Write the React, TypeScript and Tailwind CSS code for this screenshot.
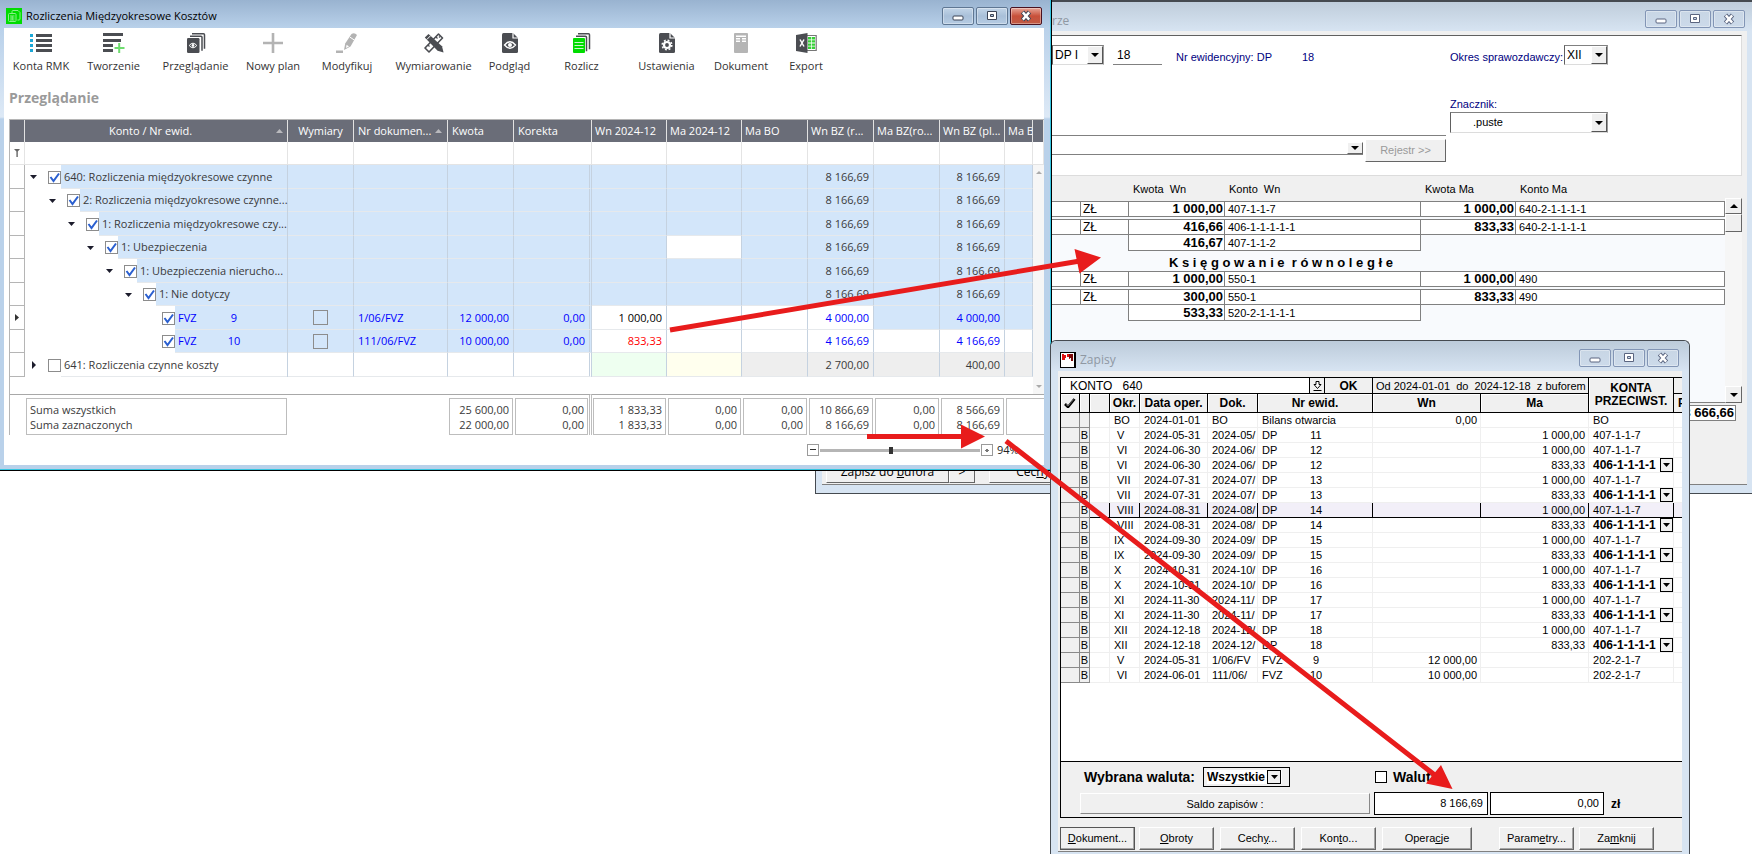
import React from "react";
import type { ReactNode } from "react";

const UI = "font-['Open_Sans','Noto_Sans',sans-serif]";
const CLASSIC = "font-['Liberation_Sans',Arial,sans-serif]";

/* ---------- toolbar icons ---------- */

const icons: Record<string, ReactNode> = {
  konta: (
    <svg width="22" height="20" viewBox="0 0 22 20">
      {[1, 6, 11, 16].map((y) => (
        <g key={y}>
          <rect x="0" y={y} width="3" height="3" fill="#1ba7d6" />
          <rect x="6" y={y} width="16" height="3" fill="#4b4d52" />
        </g>
      ))}
    </svg>
  ),
  tworzenie: (
    <svg width="22" height="20" viewBox="0 0 22 20">
      <path d="M0 0h20v3H0zM0 6h18v3H0zM0 11h10v3H0zM0 16h10v3H0z" fill="#4b4d52" />
      <path d="M16.2 10v10M11.5 15h10" stroke="#6fdc6f" strokeWidth="2" />
    </svg>
  ),
  przegladanie: (
    <svg width="20" height="20" viewBox="0 0 20 20">
      <path d="M6 .8h11.500q1 0 1 1v14" fill="none" stroke="#4b4d52" strokeWidth="1.500" />
      <path d="M4 3.200h11q1 0 1 1v13.500" fill="none" stroke="#4b4d52" strokeWidth="1.500" />
      <rect x="1" y="5" width="12.500" height="15" rx="1.200" fill="#4b4d52" />
      <path d="M3.200 12.500q3.800-4.600 7.600 0q-3.800 4.600-7.600 0z" fill="none" stroke="#fff" strokeWidth="1" />
      <circle cx="7" cy="12.500" r="1.400" fill="#fff" />
    </svg>
  ),
  nowy: (
    <svg width="22" height="20" viewBox="0 0 22 20">
      <path d="M11 0v20M1 10h20" stroke="#b3b3b3" strokeWidth="2.600" />
    </svg>
  ),
  modyfikuj: (
    <svg width="22" height="20" viewBox="0 0 22 20">
      <path d="M8 17l1.200-6.500L15.500 1q3-2 5.500 1L14.500 13.500z" fill="#b3b3b3" />
      <path d="M10 15l.6-3.200 2.400 1.600z" fill="#fff" />
      <path d="M14 4.200l4.600 3" stroke="#fff" strokeWidth="1" />
      <rect x="0" y="17.500" width="7" height="2.500" fill="#b3b3b3" />
    </svg>
  ),
  wymiarowanie: (
    <svg width="20" height="20" viewBox="0 0 20 20">
      <path d="M14.500 1l4 4L5 19l-4-4z" fill="#fff" stroke="#4b4d52" strokeWidth="1.600" strokeLinejoin="round" />
      <path d="M12 4l1.500 1.500M9 7l1.500 1.500M4 12l1.500 1.500M15 3.500l1 1" stroke="#4b4d52" strokeWidth="1.200" />
      <path d="M.8 4.500L4.500 1 18 13.200l1.600 6.200-6-1.700z" fill="#4b4d52" />
      <path d="M2.800 6.500l3.600-3.600" stroke="#fff" strokeWidth="1" />
    </svg>
  ),
  podglad: (
    <svg width="16" height="20" viewBox="0 0 16 20">
      <path d="M1.500 0H11l5 5v13.500q0 1.500-1.500 1.500h-13Q0 20 0 18.500v-17Q0 0 1.500 0z" fill="#4b4d52" />
      <path d="M11 0v5h5" fill="none" stroke="#fff" strokeWidth="1.200" />
      <path d="M2.500 12q5.500-6.500 11 0q-5.500 6.500-11 0z" fill="none" stroke="#fff" strokeWidth="1.300" />
      <circle cx="8" cy="12" r="2" fill="#fff" />
    </svg>
  ),
  rozlicz: (
    <svg width="18" height="20" viewBox="0 0 18 20">
      <path d="M5 .8h10.500q1 0 1 1v14.500" fill="none" stroke="#4b4d52" strokeWidth="1.500" />
      <path d="M3 3.300h9.500q1 0 1 1v14" fill="none" stroke="#4b4d52" strokeWidth="1.500" />
      <rect x="0" y="5" width="12" height="15" rx="1" fill="#00dc00" />
      <path d="M1.500 9.500h9M1.500 12.500h9M1.500 15.500h9" stroke="#c9f7c9" strokeWidth="1.200" />
    </svg>
  ),
  ustawienia: (
    <svg width="16" height="20" viewBox="0 0 16 20">
      <path d="M1.500 0H11l5 5v13.500q0 1.500-1.500 1.500h-13Q0 20 0 18.500v-17Q0 0 1.500 0z" fill="#4b4d52" />
      <path d="M11 0v5h5" fill="none" stroke="#fff" strokeWidth="1.200" />
      <circle cx="8" cy="12" r="3" fill="none" stroke="#fff" strokeWidth="2.200" />
      <circle cx="8" cy="12" r="4.800" fill="none" stroke="#fff" strokeWidth="1.600" strokeDasharray="1.900 1.870" />
    </svg>
  ),
  dokument: (
    <svg width="14" height="20" viewBox="0 0 14 20">
      <rect width="14" height="20" rx="1" fill="#b5b5b5" />
      <path d="M2 3.200h10M2 5.800h4M8 5.800h4M2 8.200h4M8 8.200h4" stroke="#fff" strokeWidth="1.400" />
    </svg>
  ),
  export: (
    <svg width="21" height="20" viewBox="0 0 21 20">
      <path d="M10 2.500h10.200v15H10" fill="#fff" stroke="#777" strokeWidth="1.200" />
      <path d="M12 4h3.300v2.400H12zM16 4h3v2.400h-3zM12 7.200h3.300v2.400H12zM16 7.200h3v2.400h-3zM12 10.400h3.300v2.400H12zM16 10.400h3v2.400h-3zM12 13.600h3.300V16H12zM16 13.600h3V16h-3z" fill="#37cf37" />
      <path d="M0 2L11.500 0v20L0 18z" fill="#4b4d52" />
      <path d="M4 6.500l4 7M8 6.500l-4 7" stroke="#fff" strokeWidth="1.500" />
    </svg>
  ),
};

const tools = [
  { icon: "konta", label: "Konta RMK", w: "w-[74px]" },
  { icon: "tworzenie", label: "Tworzenie", w: "w-[71px]" },
  { icon: "przegladanie", label: "Przeglądanie", w: "w-[93px]" },
  { icon: "nowy", label: "Nowy plan", w: "w-[62px]" },
  { icon: "modyfikuj", label: "Modyfikuj", w: "w-[86px]" },
  { icon: "wymiarowanie", label: "Wymiarowanie", w: "w-[87px]" },
  { icon: "podglad", label: "Podgląd", w: "w-[65px]" },
  { icon: "rozlicz", label: "Rozlicz", w: "w-[79px]" },
  { icon: "ustawienia", label: "Ustawienia", w: "w-[91px]" },
  { icon: "dokument", label: "Dokument", w: "w-[58px]" },
  { icon: "export", label: "Export", w: "w-[72px]" },
];

/* ---------- shared pieces ---------- */

const captionLook = {
  active: "border-[#5f7793] bg-linear-to-b from-[#c3d5e8] via-[#a9c0d9] to-[#b6cce3]",
  inactive: "border-[#8295b5] bg-linear-to-b from-[#c8d6e5] to-[#ccdaea]",
  close: "border-[#4a1220] bg-linear-to-b from-[#e5a598] via-[#c8503a] to-[#c05a45]",
};

function CaptionButton({ kind, look }: { kind: "min" | "max" | "close"; look: keyof typeof captionLook }) {
  const line = look === "inactive" ? "#5a6580" : "#3c4456";
  return (
    <button
      aria-label={kind}
      className={`flex h-[18px] w-8 items-center justify-center rounded-xs border shadow-[inset_0_0_0_1px_rgba(255,255,255,0.35)] ${captionLook[look]}`}
    >
      <svg width="14" height="12" viewBox="0 0 14 12">
        {kind === "min" && <rect x="2" y="6" width="10" height="4" rx="1" fill="#fff" stroke={line} />}
        {kind === "max" && (
          <path d="M2.500 1.500h9v8h-9zM5.500 4.500h3v2h-3z" fill="#fff" fillRule="evenodd" stroke={line} />
        )}
        {kind === "close" && (
          <>
            <path d="M3.500 2l7 8M10.500 2l-7 8" stroke={line} strokeWidth="4.400" />
            <path d="M3.800 2.400l6.400 7.200M10.200 2.400l-6.400 7.200" stroke="#fff" strokeWidth="2.400" />
          </>
        )}
      </svg>
    </button>
  );
}

function Triangle({ dir, color = "#000", w = 8, h = 4 }: { dir: "up" | "down" | "right"; color?: string; w?: number; h?: number }) {
  const d = dir === "up" ? `M0 ${h}H${w}L${w / 2} 0z` : dir === "down" ? `M0 0H${w}L${w / 2} ${h}z` : `M0 0L${w} ${h / 2}L0 ${h}z`;
  return (
    <svg width={w} height={h} viewBox={`0 0 ${w} ${h}`} className="shrink-0">
      <path d={d} fill={color} />
    </svg>
  );
}

function Combo({ value, label, box, text }: { value: string; label: string; box: string; text: string }) {
  return (
    <div className={`relative flex border border-b-[#dcdcdc] border-r-[#9a9a9a] border-t-[#808080] border-l-[#606060] bg-white ${box}`}>
      <select aria-label={label} className={`w-full appearance-none bg-white whitespace-pre text-black outline-none ${text}`} defaultValue={value}>
        <option value={value}>{value}</option>
      </select>
      <span className="pointer-events-none absolute inset-y-0 right-0 flex w-4 items-center justify-center border border-t-white border-r-[#555] border-b-[#555] border-l-white bg-[#f0f0f0]">
        <Triangle dir="down" />
      </span>
    </div>
  );
}

/* ---------- posting window ---------- */

const postings = [
  { zl: true, wn: "1 000,00", kw: "407-1-1-7", ma: "1 000,00", km: "640-2-1-1-1-1" },
  { gap: true },
  { zl: true, wn: "416,66", kw: "406-1-1-1-1-1", ma: "833,33", km: "640-2-1-1-1-1" },
  { zl: false, wn: "416,67", kw: "407-1-1-2" },
  { title: "K s i ę g o w a n i e  r ó w n o l e g ł e" },
  { zl: true, wn: "1 000,00", kw: "550-1", ma: "1 000,00", km: "490" },
  { gap: true },
  { zl: true, wn: "300,00", kw: "550-1", ma: "833,33", km: "490" },
  { zl: false, wn: "533,33", kw: "520-2-1-1-1-1" },
];

function PostingWindow() {
  const raised = "border border-t-white border-l-white border-r-[#666] border-b-[#666] bg-[#f0f0f0]";
  return (
    <section
      className={`absolute top-0 right-0 left-[815px] flex h-[494px] flex-col border-t-2 border-b border-l border-[#454a50] bg-[#d7e4f2] pr-[5px] pb-2 pl-[6px] text-[11px] ${CLASSIC}`}
    >
      <header className="-mr-[5px] -ml-[6px] flex h-[29px] shrink-0 items-center bg-linear-to-b from-[#bfcddb] to-[#d7e4f2] pr-[7px] pl-[236px]">
        <h2 className={`flex-1 pt-2 text-[12px] leading-4 text-[#8f98a3] ${UI}`}>rze</h2>
        <div className="flex gap-[2px] pt-1">
          <CaptionButton kind="min" look="inactive" />
          <CaptionButton kind="max" look="inactive" />
          <CaptionButton kind="close" look="inactive" />
        </div>
      </header>
      <div className="flex min-h-0 flex-1 flex-col bg-[#f0f0f0] pt-1">
        <div className="mr-[5px] flex h-[141px] shrink-0 border-t border-r border-b border-t-[#606060] border-r-[#dcdcdc] border-b-[#dcdcdc] bg-white pl-[230px]">
          <div className="flex-1 pt-[9px] pr-1">
            <div className="flex h-5 items-center">
              <Combo label="Typ dokumentu" value={"DP    I"} box="h-5 w-[52px]" text="pl-[2px] text-[12px]" />
              <input aria-label="Numer" defaultValue="18" className="ml-[9px] h-5 w-[49px] border-b border-[#808080] pl-1 text-[12px] outline-none" />
              <span className="ml-[14px] pt-1 text-[#000080]">Nr ewidencyjny: DP</span>
              <span className="ml-[30px] pt-1 text-[#000080]">18</span>
            </div>
            <div className="h-[71px] border-b border-[#808080]" />
            <div className="flex items-start gap-[2px]">
              <div className="flex h-[19px] flex-1 items-end justify-end border-b border-[#808080]">
                <button aria-label="Rozwiń" className={`flex h-3 w-4 items-center justify-center ${raised}`}>
                  <Triangle dir="down" />
                </button>
              </div>
              <button className={`mt-[3px] h-[23px] w-[81px] text-[11px] text-[#9a9a9a] ${raised}`}>Rejestr &gt;&gt;</button>
            </div>
          </div>
          <div className="w-[291px] pt-[9px]">
            <div className="flex h-5 items-center">
              <span className="w-[114px] shrink-0 pt-1 whitespace-nowrap text-[#000080]">Okres sprawozdawczy:</span>
              <Combo label="Okres sprawozdawczy" value="XII" box="h-5 w-11" text="pl-[2px] text-[12px]" />
            </div>
            <div className="mt-8 h-[15px] leading-[14px] text-[#000080]">Znacznik:</div>
            <Combo label="Znacznik" value=".puste" box="h-[21px] w-[158px]" text="pl-[22px] text-[11px]" />
          </div>
        </div>
        <div className="mr-[5px] flex h-[227px] shrink-0">
          <div className="flex-1 border-b border-[#808080] bg-[#f8fafd]">
            <table className="w-full table-fixed border-separate border-spacing-0 leading-[14px]">
              <colgroup>
                <col className="w-[259px]" />
                <col className="w-12" />
                <col className="w-24" />
                <col className="w-[196px]" />
                <col className="w-[95px]" />
                <col />
              </colgroup>
              <thead>
                <tr className="h-[25px] bg-[#f0f0f0] text-left whitespace-pre [&>th]:p-0 [&>th]:pt-px [&>th]:pl-1 [&>th]:font-normal">
                  <th />
                  <th />
                  <th>Kwota  Wn</th>
                  <th>Konto  Wn</th>
                  <th>Kwota Ma</th>
                  <th>Konto Ma</th>
                </tr>
              </thead>
              <tbody>
                {postings.map((p, i) => {
                  if (p.gap) return <tr key={i}><td colSpan={6} className="h-[2px] p-0" /></tr>;
                  if (p.title)
                    return (
                      <tr key={i}>
                        <td colSpan={2} />
                        <td colSpan={4} className="h-5 p-0 pt-1 pl-10 text-[13px] font-bold whitespace-pre">{p.title}</td>
                      </tr>
                    );
                  const top = p.zl ? "border-t" : "";
                  const cell = `h-4 border-r border-b border-[#808080] bg-white p-0 ${top}`;
                  return (
                    <tr key={i}>
                      <td className={p.zl ? cell : "p-0"} />
                      <td className={p.zl ? `${cell} pl-[2px] text-[12px]` : "border-r border-[#808080] p-0"}>{p.zl ? "ZŁ" : ""}</td>
                      <td className={`${cell} pr-px text-right text-[13px] font-bold`}>{p.wn}</td>
                      <td className={`${cell} pl-[3px]`}>{p.kw}</td>
                      <td className={p.zl ? `${cell} pr-px text-right text-[13px] font-bold` : "p-0"}>{p.ma}</td>
                      <td className={p.zl ? `${cell} pl-[3px]` : "p-0"}>{p.km}</td>
                    </tr>
                  );
                })}
              </tbody>
            </table>
          </div>
          <div className="mt-[22px] flex w-[17px] flex-col bg-[#f6f6f6]">
            <button aria-label="Góra" className={`flex h-4 items-center justify-center ${raised}`}>
              <Triangle dir="up" />
            </button>
            <div className={`h-[18px] ${raised}`} />
            <button aria-label="Dół" className={`mt-auto flex h-[17px] items-center justify-center ${raised}`}>
              <Triangle dir="down" />
            </button>
          </div>
        </div>
        <div className="mt-[2px] mr-[11px] flex justify-end">
          <output className="h-4 border border-[#808080] bg-white px-px text-[13px] leading-[14px] font-bold">3 666,66</output>
        </div>
        <div className="mt-auto flex h-6 border-b border-[#808080] pb-px pl-1 text-[12px]">
          <button className={`w-[123px] ${raised} ${UI}`}>Zapisz do <u>b</u>ufora</button>
          <button className={`w-[26px] ${raised} ${UI}`}>&gt;</button>
          <button className={`ml-[14px] w-[88px] ${raised} ${UI}`}>Cec<u>h</u>y</button>
        </div>
      </div>
    </section>
  );
}

/* ---------- settlements window ---------- */

function Check({ label, checked, box }: { label: string; checked?: boolean; box: string }) {
  return (
    <span className={`relative inline-flex shrink-0 ${box}`}>
      <input type="checkbox" aria-label={label} defaultChecked={checked} className="peer size-full appearance-none border border-[#8c8c8c] bg-transparent" />
      <svg viewBox="0 0 13 13" className="pointer-events-none absolute inset-0 hidden size-full peer-checked:block">
        <path d="M2.500 6l3 4L11 2.500" fill="none" stroke="#2a5fd0" strokeWidth="2" />
      </svg>
    </span>
  );
}

type Row = {
  level: number;
  name: string;
  num?: string;
  doc?: string;
  kwota?: string;
  kor?: string;
  wn?: string;
  bz: string;
  pl: string;
  kind: "group" | "current" | "leaf" | "plain";
};

const rows: Row[] = [
  { level: 0, name: "640: Rozliczenia międzyokresowe czynne", bz: "8 166,69", pl: "8 166,69", kind: "group" },
  { level: 1, name: "2: Rozliczenia międzyokresowe czynne...", bz: "8 166,69", pl: "8 166,69", kind: "group" },
  { level: 2, name: "1: Rozliczenia międzyokresowe czy...", bz: "8 166,69", pl: "8 166,69", kind: "group" },
  { level: 3, name: "1: Ubezpieczenia", bz: "8 166,69", pl: "8 166,69", kind: "group" },
  { level: 4, name: "1: Ubezpieczenia nierucho...", bz: "8 166,69", pl: "8 166,69", kind: "group" },
  { level: 5, name: "1: Nie dotyczy", bz: "8 166,69", pl: "8 166,69", kind: "group" },
  { level: 6, name: "FVZ", num: "9", doc: "1/06/FVZ", kwota: "12 000,00", kor: "0,00", wn: "1 000,00", bz: "4 000,00", pl: "4 000,00", kind: "current" },
  { level: 6, name: "FVZ", num: "10", doc: "111/06/FVZ", kwota: "10 000,00", kor: "0,00", wn: "833,33", bz: "4 166,69", pl: "4 166,69", kind: "leaf" },
  { level: 0, name: "641: Rozliczenia czynne koszty", bz: "2 700,00", pl: "400,00", kind: "plain" },
];

const indent = ["pl-0", "pl-[19px]", "pl-[38px]", "pl-[57px]", "pl-[76px]", "pl-[95px]", "pl-[114px]"];

const totals: [string, string][] = [
  ["1 833,33", "1 833,33"],
  ["0,00", "0,00"],
  ["0,00", "0,00"],
  ["10 866,69", "8 166,69"],
  ["0,00", "0,00"],
  ["8 566,69", "8 166,69"],
];

function Total({ pair, last }: { pair: [string, string]; last?: string }) {
  return (
    <td className={`px-px pt-[3px] pb-0 ${last ?? ""}`}>
      <div className="h-[37px] border border-[#bdbdbd] pt-[3px] pr-[3px] text-right leading-[15px]">
        <div>{pair[0]}</div>
        <div>{pair[1]}</div>
      </div>
    </td>
  );
}

function SettlementGrid() {
  const blue = "bg-[#d3e6fa]";
  const split = "border-r-3 border-double border-r-[#bdbdbd]";
  const heads = ["Wn 2024-12", "Ma 2024-12", "Ma BO", "Wn BZ (r...", "Ma BZ(ro...", "Wn BZ (pl...", "Ma B"];
  return (
    <div className="flex border-t border-l border-[#b5b5b5]">
      <table className="w-full flex-1 table-fixed border-separate border-spacing-0 text-[11px] leading-4 text-[#3a3a3a]">
        <colgroup>
          <col className="w-[15px]" />
          <col className="w-[263px]" />
          <col className="w-[66px]" />
          <col className="w-[94px]" />
          <col className="w-[66px]" />
          <col className="w-[78px]" />
          <col className="w-[75px]" />
          <col className="w-[75px]" />
          <col className="w-[66px]" />
          <col className="w-[66px]" />
          <col className="w-[66px]" />
          <col className="w-[65px]" />
          <col className="w-[28px]" />
          <col />
        </colgroup>
        <thead>
          <tr className="h-[22px] bg-[#6a6d78] text-left text-white [&>th]:overflow-hidden [&>th]:border-r [&>th]:border-[#e2e2e2] [&>th]:p-0 [&>th]:font-normal [&>th]:whitespace-nowrap">
            <th />
            <th>
              <div className="flex items-center pr-1">
                <span className="flex-1 text-center">Konto / Nr ewid.</span>
                <Triangle dir="up" color="#b9b9bd" w={7} />
              </div>
            </th>
            <th className="text-center">Wymiary</th>
            <th>
              <div className="flex items-center justify-between pr-[5px] pl-1">
                Nr dokumen... <Triangle dir="up" color="#b9b9bd" w={7} />
              </div>
            </th>
            <th><span className="pl-1">Kwota</span></th>
            <th className={split}><span className="pl-1">Korekta</span></th>
            {heads.map((h) => (
              <th key={h}><span className="pl-[3px]">{h}</span></th>
            ))}
            <th />
          </tr>
          <tr className="h-[23px] [&>td]:border-r [&>td]:border-b [&>td]:border-[#e4e4e4] [&>td]:p-0">
            <td className="border-[#b5b5b5]">
              <svg width="6" height="8" viewBox="0 0 6 8" className="mx-auto">
                <path d="M0 0h6L3.800 2.500V8H2.400V2.500z" fill="#666" />
              </svg>
            </td>
            <td /><td /><td /><td />
            <td className={split} />
            <td /><td /><td /><td /><td /><td /><td /><td />
          </tr>
        </thead>
        <tbody>
          {rows.map((r, i) => {
            const item = r.kind === "current" || r.kind === "leaf";
            const left = r.kind === "plain" ? "bg-white" : blue;
            const rest = { group: blue, current: blue, leaf: "bg-white", plain: "bg-[#eeeeee]" }[r.kind];
            const mid = item ? "bg-white" : rest;
            const c = "border-r border-b border-r-[#c5d2e0] border-b-[#e6e9ec] p-0 ";
            const num = item ? "pr-1 text-right text-[#0000ff]" : "pr-1 text-right";
            return (
              <tr key={i} className="odd:h-6 even:h-[23px]">
                <td className="border-r border-b border-[#b5b5b5] p-0">
                  {r.kind === "current" && <span className="flex justify-center"><Triangle dir="right" w={4} h={7} color="#333" /></span>}
                </td>
                <td className="h-px border-r border-[#c5d2e0] p-0">
                  <div className={`flex h-full items-center ${indent[r.level]}`}>
                    <span className="mr-[5px] flex w-[18px] shrink-0 items-center justify-center pr-px">
                      {!item && (r.kind === "plain" ? <Triangle dir="right" w={4} h={8} color="#1c1c2c" /> : <Triangle dir="down" w={7} h={4} color="#1c1c2c" />)}
                    </span>
                    <Check label={r.name} checked={r.kind !== "plain"} box="size-[13px]" />
                    <span className={`flex h-full min-w-0 flex-1 items-center border-b border-[#e6e9ec] pl-[3px] whitespace-nowrap ${left} ${item ? "text-[#0000ff]" : ""}`}>
                      {item ? (
                        <>
                          <span className="w-[46px]">{r.name}</span>
                          <span className="w-5 text-center">{r.num}</span>
                        </>
                      ) : (
                        r.name
                      )}
                    </span>
                  </div>
                </td>
                <td className={c + left}>
                  {item && <span className="flex justify-center"><Check label="Wymiary" box="size-[15px]" /></span>}
                </td>
                <td className={`${c}${left}`}><span className="pl-1 text-[#0000ff]">{r.doc}</span></td>
                <td className={`${c}${left} ${num}`}>{r.kwota}</td>
                <td className={`${c}${left} ${num} ${split}`}>{r.kor}</td>
                <td className={`${c}${r.kind === "plain" ? "bg-[#eefff0]" : mid} pr-1 text-right ${r.kind === "leaf" ? "text-[#ff0000]" : "text-black"}`}>{r.wn}</td>
                <td className={`${c}${r.kind === "plain" ? "bg-[#ffffee]" : i === 3 ? "bg-white" : mid}`} />
                <td className={c + mid} />
                <td className={`${c}${mid} ${num}`}>{r.bz}</td>
                <td className={c + rest} />
                <td className={`${c}${rest} ${num}`}>{r.pl}</td>
                <td className={c + rest} />
                {i === 0 && (
                  <td rowSpan={10} className="h-px bg-[#f6f6f6] p-0">
                    <div className="flex h-full flex-col items-center justify-between py-[6px]">
                      <Triangle dir="up" color="#aaa" w={6} h={3} />
                      <Triangle dir="down" color="#aaa" w={6} h={3} />
                    </div>
                  </td>
                )}
              </tr>
            );
          })}
          <tr className="h-[17px]"><td colSpan={13} className="p-0" /></tr>
        </tbody>
        <tfoot>
          <tr className="[&>td]:border-t [&>td]:border-t-[#a8a8a8]">
            <td />
            <td className="px-px pt-[3px] pb-0">
              <div className="h-[37px] border border-[#bdbdbd] pt-[3px] pl-[3px] leading-[15px]">
                <div>Suma wszystkich</div>
                <div>Suma zaznaczonych</div>
              </div>
            </td>
            <td />
            <td />
            <Total pair={["25 600,00", "22 000,00"]} />
            <Total pair={["0,00", "0,00"]} last={split} />
            {totals.map((t, i) => (
              <Total key={i} pair={t} />
            ))}
            <td colSpan={2} className="pt-[3px] pr-0 pb-0 pl-px">
              <div className="h-[37px] border-t border-b border-l border-[#bdbdbd]" />
            </td>
          </tr>
        </tfoot>
      </table>
    </div>
  );
}

function SettlementWindow() {
  const step = "flex size-3 items-center justify-center border border-[#9a9a9a] bg-white";
  return (
    <section
      className={`absolute top-0 left-0 z-10 flex h-[471px] w-[1052px] flex-col border-r border-b border-black bg-[linear-gradient(to_bottom,#99b3d0_0px,#b9d1ea_28px,#dde9f6_117px,#b9d1ea_119px)] pr-[7px] pb-[5px] pl-1 shadow-[inset_-1px_-1px_0_#35c5e0] ${UI}`}
    >
      <header className="flex h-7 shrink-0 items-center pt-1 pl-[2px]">
        <svg width="16" height="16" viewBox="0 0 16 16">
          <rect width="16" height="16" fill="#00dc00" />
          <path d="M6 5V3.500q0-1 1-1h5l2 2V11q0 1-1 1h-1.500M2.500 6.500q0-1 1-1H9q1 0 1 1v6q0 1-1 1H3.500q-1 0-1-1zM4 8h4.500M4 10h4.500M4 12h4.500M6.200 8v4" fill="none" stroke="#8af08a" strokeWidth="1" />
        </svg>
        <h1 className="ml-1 flex-1 text-[11px] text-black">Rozliczenia Międzyokresowe Kosztów</h1>
        <div className="mr-[2px] flex gap-[2px]">
          <CaptionButton kind="min" look="active" />
          <CaptionButton kind="max" look="active" />
          <CaptionButton kind="close" look="close" />
        </div>
      </header>
      <div className="flex flex-1 flex-col bg-white">
        <nav className="flex pt-[5px]">
          {tools.map((t) => (
            <button key={t.label} className={`flex h-11 flex-col items-center gap-[5px] text-[11px] leading-4 text-[#333] ${t.w}`}>
              <span className="flex h-5 items-center">{icons[t.icon]}</span>
              <span className="whitespace-nowrap">{t.label}</span>
            </button>
          ))}
        </nav>
        <h2 className="mt-[10px] mb-[11px] ml-[5px] text-[14px] leading-[21px] font-bold text-[#9a9a9a]">Przeglądanie</h2>
        <div className="pl-[5px]">
          <SettlementGrid />
        </div>
        <div className="mt-[7px] mr-[6px] flex items-center justify-end">
          <button aria-label="Pomniejsz" className={step}><svg width="6" height="2"><rect width="6" height="1" fill="#333" /></svg></button>
          <input
            type="range"
            aria-label="Powiększenie"
            min={0}
            max={100}
            defaultValue={44}
            className="mx-px h-3 w-40 appearance-none bg-[linear-gradient(#b5b5b5,#b5b5b5)] bg-[length:100%_3px] bg-center bg-no-repeat [&::-webkit-slider-thumb]:h-[7px] [&::-webkit-slider-thumb]:w-1 [&::-webkit-slider-thumb]:appearance-none [&::-webkit-slider-thumb]:bg-[#333]"
          />
          <button aria-label="Powiększ" className={step}><svg width="4" height="3"><path d="M0 1h4v1H0zM1 0h2v3H1z" fill="#777" /></svg></button>
          <span className="ml-1 w-[41px] text-[11px] leading-4 text-[#222]">94%</span>
        </div>
      </div>
    </section>
  );
}

/* ---------- entries window ---------- */

const entries: [string, string, string, string, string, string, string][] = [
  ["BO", "2024-01-01", "BO", "Bilans otwarcia", "", "0,00", ""],
  ["V", "2024-05-31", "2024-05/", "DP", "11", "", "1 000,00"],
  ["VI", "2024-06-30", "2024-06/", "DP", "12", "", "1 000,00"],
  ["VI", "2024-06-30", "2024-06/", "DP", "12", "", "833,33"],
  ["VII", "2024-07-31", "2024-07/", "DP", "13", "", "1 000,00"],
  ["VII", "2024-07-31", "2024-07/", "DP", "13", "", "833,33"],
  ["VIII", "2024-08-31", "2024-08/", "DP", "14", "", "1 000,00"],
  ["VIII", "2024-08-31", "2024-08/", "DP", "14", "", "833,33"],
  ["IX", "2024-09-30", "2024-09/", "DP", "15", "", "1 000,00"],
  ["IX", "2024-09-30", "2024-09/", "DP", "15", "", "833,33"],
  ["X", "2024-10-31", "2024-10/", "DP", "16", "", "1 000,00"],
  ["X", "2024-10-31", "2024-10/", "DP", "16", "", "833,33"],
  ["XI", "2024-11-30", "2024-11/", "DP", "17", "", "1 000,00"],
  ["XI", "2024-11-30", "2024-11/", "DP", "17", "", "833,33"],
  ["XII", "2024-12-18", "2024-12/", "DP", "18", "", "1 000,00"],
  ["XII", "2024-12-18", "2024-12/", "DP", "18", "", "833,33"],
  ["V", "2024-05-31", "1/06/FV", "FVZ", "9", "12 000,00", ""],
  ["VI", "2024-06-01", "111/06/", "FVZ", "10", "10 000,00", ""],
];

const actions: { w: string; text: ReactNode }[] = [
  { w: "w-[75px] outline outline-[#555] -outline-offset-1", text: <><u>D</u>okument...</> },
  { w: "ml-1 w-[75px]", text: <><u>O</u>broty</> },
  { w: "ml-[6px] w-[75px]", text: <>Cech<u>y</u>...</> },
  { w: "ml-[6px] w-[75px]", text: <>Kon<u>t</u>o...</> },
  { w: "ml-[6px] w-[90px]", text: <>Opera<u>c</u>je</> },
  { w: "ml-[27px] w-[75px]", text: <>Param<u>e</u>try...</> },
  { w: "ml-[5px] w-[75px]", text: <>Za<u>m</u>knij</> },
];

function EntriesWindow() {
  const head = "border-r border-b border-black bg-[#f0f0f0] p-0 text-center text-[12px] font-bold shadow-[inset_1px_1px_0_#fff]";
  return (
    <section
      className={`absolute top-[340px] left-[1050px] z-20 flex w-[640px] flex-col rounded-t-md border border-b-0 border-[#454a50] bg-[#d7e4f2] px-[7px] text-[11px] text-black ${CLASSIC}`}
    >
      <header className="-mx-[7px] flex h-[30px] shrink-0 items-center rounded-t-md bg-linear-to-b from-[#bccbda] to-[#d7e4f2] pr-[10px] pl-[9px] pt-[7px]">
        <svg width="16" height="16" viewBox="0 0 16 16">
          <rect width="16" height="16" fill="#000" />
          <rect x="1" y="1" width="13" height="14" fill="#fff" />
          <path d="M2 2h2v1h2v3H5v2H2zM7 2h3v5H9V5H7z" fill="#e01010" />
          <path d="M9 2h4v7h-2V6H9z" fill="#7a0a0a" />
        </svg>
        <h2 className={`ml-1 flex-1 text-[12px] leading-4 text-[#8f98a3] ${UI}`}>Zapisy</h2>
        <div className="-mt-1 flex gap-[2px]">
          <CaptionButton kind="min" look="inactive" />
          <CaptionButton kind="max" look="inactive" />
          <CaptionButton kind="close" look="inactive" />
        </div>
      </header>
      <div className="bg-[#f0f0f0] pt-[6px] pl-[2px]">
        <div className="h-[441px] border-t border-b-2 border-l border-black bg-white">
          <table className="w-full table-fixed border-separate border-spacing-0 leading-[14px]">
            <colgroup>
              <col className="w-[19px]" />
              <col className="w-[10px]" />
              <col className="w-5" />
              <col className="w-[30px]" />
              <col className="w-[68px]" />
              <col className="w-[50px]" />
              <col className="w-[115px]" />
              <col className="w-[108px]" />
              <col className="w-[108px]" />
              <col className="w-[85px]" />
              <col />
            </colgroup>
            <thead>
              <tr className="h-4">
                <td colSpan={7} className="border-r border-b border-black p-0">
                  <div className="flex h-[15px]">
                    <span className="flex flex-1 gap-[10px] pl-[9px] text-[12px] leading-4"><span>KONTO</span><span>640</span></span>
                    <button aria-label="Wybierz konto" className="flex w-4 items-center justify-center border-x border-black bg-[#f0f0f0]">
                      <svg width="9" height="10" viewBox="0 0 9 10">
                        <path d="M3 .5h3v3h2L4.500 7.500 1 3.500h2zM.5 9.500h8" fill="#fff" stroke="#000" />
                      </svg>
                    </button>
                    <button className="w-[47px] bg-[#f0f0f0] text-[12px] font-bold">OK</button>
                  </div>
                </td>
                <td colSpan={2} className="border-r border-b border-black bg-[#f0f0f0] p-0 pl-[3px] whitespace-pre">
                  Od 2024-01-01  do  2024-12-18  z buforem
                </td>
                <th rowSpan={2} className={`${head} leading-[13px]`}>KONTA<br />PRZECIWST.</th>
                <td className="border-b border-black bg-[#f0f0f0] p-0" />
              </tr>
              <tr className="h-[19px]">
                <th className={head}>
                  <svg width="12" height="10" viewBox="0 0 12 10" className="mx-auto">
                    <path d="M1 6l3 3L10.500 1" fill="none" stroke="#000" strokeWidth="2.600" />
                    <path d="M2 6.500l2 1.500L9.500 1.500" fill="none" stroke="#888" strokeWidth=".8" />
                  </svg>
                </th>
                <th className={head} />
                <th className={head} />
                <th className={head}>Okr.</th>
                <th className={head}>Data oper.</th>
                <th className={head}>Dok.</th>
                <th className={head}>Nr ewid.</th>
                <th className={head}>Wn</th>
                <th className={head}>Ma</th>
                <th className="overflow-hidden border-b border-black bg-[#f0f0f0] p-0 pl-1 text-left text-[12px]">P</th>
              </tr>
            </thead>
            <tbody>
              {entries.map((e, i) => {
                const sel = i === 6;
                const many = e[6] === "833,33";
                const c = sel
                  ? "border-r border-b border-black bg-[#f2eff8] p-0"
                  : "border-r border-b border-[#efefef] p-0";
                const grip = "border-r border-b border-[#8a8a8a] bg-[#f0f0f0] p-0 text-center";
                const roman = e[0].startsWith("V") ? "pl-[7px]" : "pl-1";
                return (
                  <tr key={i} className="h-[15px]">
                    <td className={grip} />
                    <td className={grip}>{i ? "B" : ""}</td>
                    <td className={c} />
                    <td className={`${c} ${roman}`}>{e[0]}</td>
                    <td className={`${c} pl-1`}>{e[1]}</td>
                    <td className={`${c} pl-1 whitespace-nowrap`}>{e[2]}</td>
                    <td className={`${c} pl-1`}>
                      {e[4] ? (
                        <span className="flex"><span className="w-[42px]">{e[3]}</span><span className="w-6 text-center">{e[4]}</span></span>
                      ) : (
                        e[3]
                      )}
                    </td>
                    <td className={`${c} pr-[3px] text-right`}>{e[5]}</td>
                    <td className={`${c} pr-[3px] text-right`}>{e[6]}</td>
                    <td className={`${c} pl-1`}>
                      {many ? (
                        <span className="flex h-[14px] items-center justify-between text-[12px] font-bold">
                          406-1-1-1-1
                          <button aria-label="Więcej kont" className="flex h-[14px] w-[13px] items-center justify-center border border-black bg-[#f0f0f0]">
                            <Triangle dir="down" w={7} />
                          </button>
                        </span>
                      ) : i === 0 ? (
                        "BO"
                      ) : i > 15 ? (
                        "202-2-1-7"
                      ) : (
                        "407-1-1-7"
                      )}
                    </td>
                    <td className={`${c} border-r-0`} />
                  </tr>
                );
              })}
            </tbody>
          </table>
          <div className="mt-[78px] h-14 border-t border-black bg-[#f0f0f0]">
            <div className="flex h-[30px] items-center pl-[23px]">
              <span className="w-[119px] text-[14px] font-bold">Wybrana waluta:</span>
              <div className="relative flex h-5 w-[87px] items-center border border-black">
                <select aria-label="Wybrana waluta" className="ml-[3px] w-[75px] appearance-none bg-white text-[12px] leading-[14px] font-bold outline-none">
                  <option>Wszystkie</option>
                </select>
                <span className="pointer-events-none absolute right-2 flex h-[14px] w-[14px] items-center justify-center border border-black bg-[#f0f0f0]">
                  <Triangle dir="down" w={7} />
                </span>
              </div>
              <label className="ml-[85px] flex items-center gap-[6px] text-[14px] font-bold">
                <input type="checkbox" className="size-3 appearance-none border border-black bg-white" />
                Waluta
              </label>
            </div>
            <div className="flex h-[23px] items-center pl-[19px] text-[11px]">
              <div className="h-[21px] w-[290px] border border-t-white border-r-[#888] border-b-[#888] border-l-white text-center leading-5">Saldo zapisów :</div>
              <output className="ml-1 h-[23px] w-[114px] border border-black bg-white pr-1 text-right leading-5">8 166,69</output>
              <output className="ml-[2px] h-[23px] w-[114px] border border-black bg-white pr-1 text-right leading-5">0,00</output>
              <span className="ml-[7px] text-[12px] font-bold">zł</span>
            </div>
          </div>
        </div>
        <footer className="-ml-[2px] flex border-b border-[#808080] pt-[9px] pb-px pl-[2px]">
          {actions.map((a, i) => (
            <button
              key={i}
              className={`h-[23px] border border-t-white border-r-[#666] border-b-[#666] border-l-white bg-[#f0f0f0] text-[11px] shadow-[inset_-1px_-1px_0_#a5a5a5] ${a.w}`}
            >
              {a.text}
            </button>
          ))}
        </footer>
      </div>
      <div className="h-4" />
    </section>
  );
}

/* ---------- annotation arrows ---------- */

function Arrows() {
  return (
    <svg className="pointer-events-none absolute top-0 left-0 z-30" width="1752" height="854" viewBox="0 0 1752 854" fill="#e81c1c" stroke="#e81c1c">
      <path d="M670 330L1080 261M867 436.500H963M1006 441L1436 776" strokeWidth="5" />
      <path d="M1101 257.500L1074.500 249L1079.500 273.500zM985 436.500L961 424.500V448.500zM1452.500 789L1441 765L1426 783.500z" stroke="none" />
    </svg>
  );
}

export default function App() {
  return (
    <main className="relative h-screen w-full overflow-hidden bg-white">
      <PostingWindow />
      <SettlementWindow />
      <EntriesWindow />
      <Arrows />
    </main>
  );
}
